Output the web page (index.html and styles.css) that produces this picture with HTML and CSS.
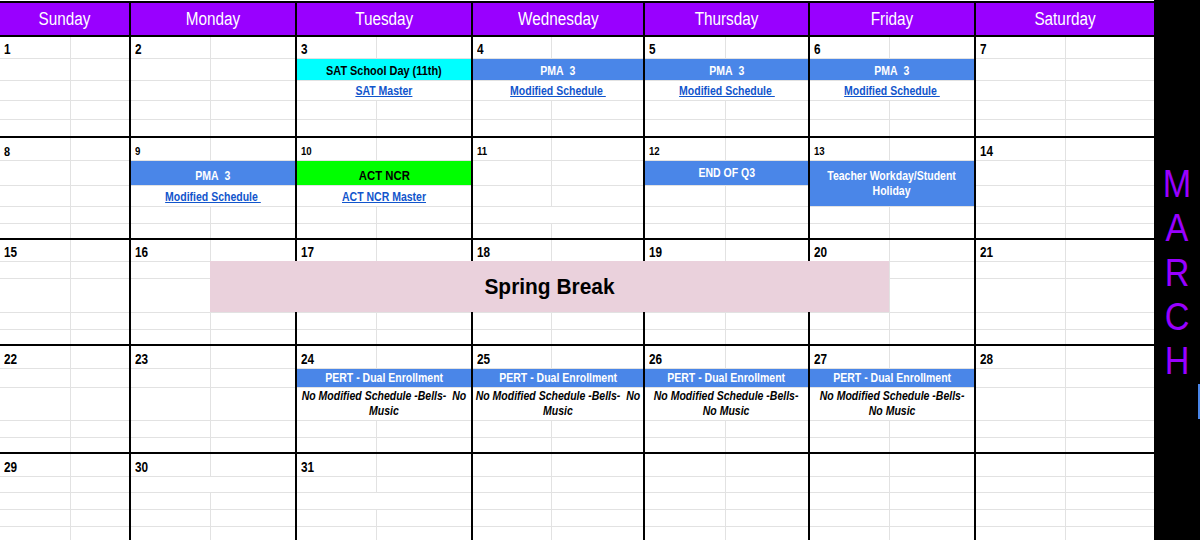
FILE: index.html
```html
<!DOCTYPE html>
<html lang="en">
<head>
<meta charset="utf-8">
<title>March Calendar</title>
<link rel="stylesheet" href="styles.css">
</head>
<body>
<div class="page">
  <div class="cal">
    <div class="h"><span class="x">Sunday</span></div>
    <div class="h"><span class="x">Monday</span></div>
    <div class="h"><span class="x">Tuesday</span></div>
    <div class="h"><span class="x">Wednesday</span></div>
    <div class="h"><span class="x">Thursday</span></div>
    <div class="h"><span class="x">Friday</span></div>
    <div class="h"><span class="x">Saturday</span></div>

    <!-- week 1 -->
    <div class="d w1"><b class="n"><span class="x">1</span></b><i></i><i></i><i></i><i></i><i></i><i></i><i></i><i></i><i></i></div>
    <div class="d w1"><b class="n"><span class="x">2</span></b><i></i><i></i><i></i><i></i><i></i><i></i><i></i><i></i><i></i></div>
    <div class="d w1"><b class="n"><span class="x">3</span></b><i></i><div class="bar cy"><span class="x">SAT School Day (11th)</span></div><div class="lk"><a class="x" href="#">SAT Master</a></div><i></i><i></i><i></i><i></i></div>
    <div class="d w1"><b class="n"><span class="x">4</span></b><i></i><div class="bar"><span class="x">PMA&nbsp; 3</span></div><div class="lk"><a class="x" href="#">Modified Schedule&nbsp;</a></div><i></i><i></i><i></i><i></i></div>
    <div class="d w1"><b class="n"><span class="x">5</span></b><i></i><div class="bar"><span class="x">PMA&nbsp; 3</span></div><div class="lk"><a class="x" href="#">Modified Schedule&nbsp;</a></div><i></i><i></i><i></i><i></i></div>
    <div class="d w1"><b class="n"><span class="x">6</span></b><i></i><div class="bar"><span class="x">PMA&nbsp; 3</span></div><div class="lk"><a class="x" href="#">Modified Schedule&nbsp;</a></div><i></i><i></i><i></i><i></i></div>
    <div class="d w1"><b class="n"><span class="x">7</span></b><i></i><i></i><i></i><i></i><i></i><i></i><i></i><i></i><i></i></div>

    <!-- week 2 -->
    <div class="d w2"><b class="n m"><span class="x">8</span></b><i></i><i></i><i></i><i></i><i></i><i></i><i></i><i></i><i></i></div>
    <div class="d w2"><b class="n s"><span class="x">9</span></b><i></i><div class="bar"><span class="x">PMA&nbsp; 3</span></div><div class="lk"><a class="x" href="#">Modified Schedule&nbsp;</a></div><i></i><i></i><i></i><i></i></div>
    <div class="d w2"><b class="n s"><span class="x">10</span></b><i></i><div class="bar gr"><span class="x">ACT NCR</span></div><div class="lk"><a class="x" href="#">ACT NCR Master</a></div><i></i><i></i><i></i><i></i></div>
    <div class="d w2"><b class="n s"><span class="x">11</span></b><i></i><i></i><i></i><i></i><i></i><div class="w"></div><i></i><i></i></div>
    <div class="d w2"><b class="n s"><span class="x">12</span></b><i></i><div class="bar mid"><span class="x">END OF Q3</span></div><i></i><i></i><i></i><i></i><i></i><i></i></div>
    <div class="d w2"><b class="n s"><span class="x">13</span></b><i></i><div class="bar tall"><span class="x">Teacher Workday/Student<br>Holiday</span></div><i></i><i></i><i></i><i></i></div>
    <div class="d w2"><b class="n"><span class="x">14</span></b><i></i><i></i><i></i><i></i><i></i><i></i><i></i><i></i><i></i></div>

    <!-- week 3 -->
    <div class="d w3"><b class="n"><span class="x">15</span></b><i></i><i></i><i></i><i></i><i></i><i></i><i></i><i></i><i></i></div>
    <div class="d w3"><b class="n"><span class="x">16</span></b><i></i><i></i><i></i><i></i><i></i><i></i><i></i><i></i><i></i></div>
    <div class="d w3"><b class="n"><span class="x">17</span></b><i></i><i></i><i></i><i></i><i></i><i></i><i></i><i></i><i></i></div>
    <div class="d w3"><b class="n"><span class="x">18</span></b><i></i><i></i><i></i><i></i><i></i><i></i><i></i><i></i><i></i></div>
    <div class="d w3"><b class="n"><span class="x">19</span></b><i></i><i></i><i></i><i></i><i></i><i></i><i></i><i></i><i></i></div>
    <div class="d w3"><b class="n"><span class="x">20</span></b><i></i><i></i><i></i><i></i><i></i><i></i><i></i><i></i><i></i></div>
    <div class="d w3"><b class="n"><span class="x">21</span></b><i></i><i></i><i></i><i></i><i></i><i></i><i></i><i></i><i></i></div>

    <!-- week 4 -->
    <div class="d w4"><b class="n"><span class="x">22</span></b><i></i><i></i><i></i><i></i><i></i><i></i><i></i><i></i><i></i></div>
    <div class="d w4"><b class="n"><span class="x">23</span></b><i></i><i></i><i></i><i></i><i></i><i></i><i></i><i></i><i></i></div>
    <div class="d w4"><b class="n"><span class="x">24</span></b><i></i><div class="bar pert"><span class="x">PERT - Dual Enrollment</span></div><div class="it"><span class="x">No Modified Schedule -Bells-&nbsp; No<br>Music</span></div><i></i><i></i><i></i><i></i></div>
    <div class="d w4"><b class="n"><span class="x">25</span></b><i></i><div class="bar pert"><span class="x">PERT - Dual Enrollment</span></div><div class="it"><span class="x">No Modified Schedule -Bells-&nbsp; No<br>Music</span></div><i></i><i></i><i></i><i></i></div>
    <div class="d w4"><b class="n"><span class="x">26</span></b><i></i><div class="bar pert"><span class="x">PERT - Dual Enrollment</span></div><div class="it"><span class="x">No Modified Schedule -Bells-<br>No Music</span></div><i></i><i></i><i></i><i></i></div>
    <div class="d w4"><b class="n"><span class="x">27</span></b><i></i><div class="bar pert"><span class="x">PERT - Dual Enrollment</span></div><div class="it"><span class="x">No Modified Schedule -Bells-<br>No Music</span></div><i></i><i></i><i></i><i></i></div>
    <div class="d w4"><b class="n"><span class="x">28</span></b><i></i><i></i><i></i><i></i><i></i><i></i><i></i><i></i><i></i></div>

    <!-- week 5 -->
    <div class="d w5"><b class="n"><span class="x">29</span></b><i></i><i></i><i></i><i></i><i></i><i></i><i></i><i></i><i></i></div>
    <div class="d w5"><b class="n"><span class="x">30</span></b><i></i><div class="w"></div><i></i><i></i><i></i><i></i><i></i><i></i></div>
    <div class="d w5"><b class="n"><span class="x">31</span></b><i></i><i></i><i></i><div class="w"></div><i></i><i></i><i></i><i></i></div>
    <div class="d w5"><i></i><i></i><i></i><i></i><i></i><i></i><i></i><i></i><i></i><i></i></div>
    <div class="d w5"><i></i><i></i><i></i><i></i><i></i><i></i><i></i><i></i><i></i><i></i></div>
    <div class="d w5"><i></i><i></i><i></i><i></i><i></i><i></i><i></i><i></i><i></i><i></i></div>
    <div class="d w5"><i></i><i></i><i></i><i></i><i></i><i></i><i></i><i></i><i></i><i></i></div>

    <div class="sb"><span class="x">Spring Break</span></div>
  </div>
  <div class="side">
    <div class="month">M<br>A<br>R<br>C<br>H</div>
    <div class="tab"></div>
  </div>
</div>
</body>
</html>
```

FILE: styles.css
```css
* { box-sizing: border-box; margin: 0; padding: 0; }
html, body { width: 1200px; height: 540px; overflow: hidden; background: #fff; }
body { font-family: "Liberation Sans", Arial, sans-serif; color: #000; }

.page { display: flex; height: 540px; overflow: hidden; }

.cal {
  flex: none;
  width: 1154px;
  align-self: flex-start;
  margin-top: 1px;
  padding-top: 2px;
  background: #000;
  display: grid;
  grid-template-columns: 129px 164px 174px 170px 163px 164px 178px;
  grid-template-rows: 32px 99px 100px 104px 106px 90px;
  gap: 2px;
  position: relative;
}

.side {
  flex: 1;
  background: #000;
  display: flex;
  flex-direction: column;
  padding-top: 162px;
}
.month {
  color: #9900ff;
  font-size: 38px;
  line-height: 44.3px;
  text-align: center;
  transform: scaleX(.9);
}
.tab {
  align-self: flex-end;
  width: 2px;
  height: 35px;
  margin-top: 1px;
  background: #4a86e8;
}

.x { display: inline-block; transform: scaleX(.84); white-space: nowrap; }

.h {
  background: #9900ff;
  color: #fff;
  font-size: 18px;
  display: flex;
  align-items: center;
  justify-content: center;
}
.h .x { transform: scaleX(.85); }

.d {
  display: grid;
  gap: 1px;
  background: #e2e2e2;
  grid-template-columns: var(--c1) 1fr;
  overflow: hidden;
}
.cal > :nth-child(7n+1) { --c1: 70px; }
.cal > :nth-child(7n+2) { --c1: 79px; }
.cal > :nth-child(7n+3) { --c1: 79px; }
.cal > :nth-child(7n+4) { --c1: 78px; }
.cal > :nth-child(7n+5) { --c1: 80px; }
.cal > :nth-child(7n+6) { --c1: 79px; }
.cal > :nth-child(7n)   { --c1: 89px; }

.w1 { grid-template-rows: 21px 21px 19px 18px 16px; }
.w2 { grid-template-rows: 22px 24px 20px 16px 14px; }
.w3 { grid-template-rows: 21px 16px 33px 16px 14px; }
.w4 { grid-template-rows: 22px 18px 32px 16px 14px; }
.w5 { grid-template-rows: 22px 15px 16px 16px 17px; }

.d > * { background: #fff; min-width: 0; }

.n {
  display: flex;
  align-items: flex-end;
  padding: 0 0 1px 4px;
  font-size: 14px;
  font-weight: bold;
  line-height: 15px;
}
.n .x { transform-origin: 0 50%; }
.n.m { font-size: 13px; }
.n.s { font-size: 11.5px; }

.bar, .lk, .it, .w { grid-column: span 2; }

.bar {
  background: #4a86e8;
  color: #fff;
  font-size: 12.5px;
  font-weight: bold;
  line-height: 14px;
  display: flex;
  align-items: flex-end;
  justify-content: center;
  padding-bottom: 2px;
}
.bar.cy { background: #00ffff; color: #000; font-size: 13px; }
.bar.gr { background: #00ff00; color: #000; font-size: 13.5px; }
.bar.mid, .bar.pert { align-items: center; padding-bottom: 0; }
.bar.tall {
  grid-row: span 2;
  align-items: center;
  padding-bottom: 0;
  text-align: center;
  line-height: 15px;
}

.lk {
  display: flex;
  align-items: flex-end;
  justify-content: center;
  padding-bottom: 2px;
  font-size: 12.5px;
  font-weight: bold;
  line-height: 14px;
}
.lk a { color: #1155cc; text-decoration: underline; }

.it {
  display: flex;
  align-items: center;
  justify-content: center;
  text-align: center;
  font-size: 12.5px;
  font-weight: bold;
  font-style: italic;
  line-height: 15px;
}

.sb {
  position: absolute;
  grid-row: 4;
  grid-column: 2 / 7;
  left: 79px;
  right: 85px;
  top: 21px;
  height: 51px;
  background: #ead1dc;
  display: flex;
  align-items: center;
  justify-content: center;
  font-size: 22px;
  font-weight: bold;
}
.sb .x { transform: scaleX(.95); }
```
